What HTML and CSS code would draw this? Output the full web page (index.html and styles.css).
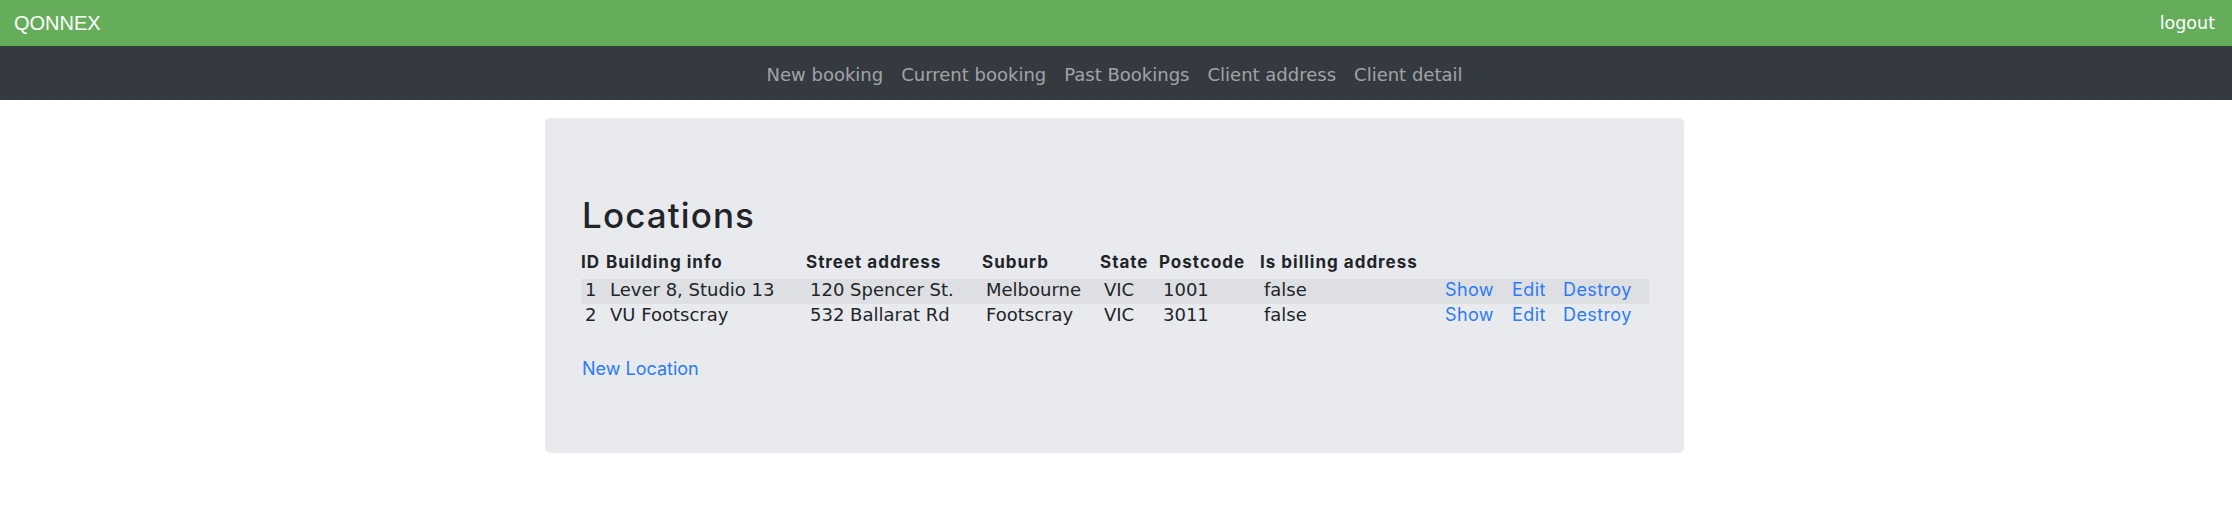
FILE: index.html
```html
<!DOCTYPE html>
<html lang="en">
<head>
<meta charset="utf-8">
<title>Locations</title>
<link rel="stylesheet" href="styles.css">
</head>
<body>
<header class="topbar">
  <span class="brand">QONNEX</span>
  <a class="logout" href="#">logout</a>
</header>
<nav class="mainnav">
  <a href="#">New booking</a>
  <a href="#">Current booking</a>
  <a href="#">Past Bookings</a>
  <a href="#">Client address</a>
  <a href="#">Client detail</a>
</nav>
<main class="page">
  <section class="card">
    <h1 class="title">Locations</h1>
    <table class="locations">
      <colgroup>
        <col class="c-id"><col class="c-building"><col class="c-street"><col class="c-suburb"><col class="c-state"><col class="c-post"><col class="c-billing"><col class="c-show"><col class="c-edit"><col class="c-destroy">
      </colgroup>
      <thead>
        <tr>
          <th>ID</th><th>Building info</th><th>Street address</th><th>Suburb</th><th>State</th><th>Postcode</th><th>Is billing address</th><th></th><th></th><th></th>
        </tr>
      </thead>
      <tbody>
        <tr class="odd">
          <td>1</td><td>Lever 8, Studio 13</td><td>120 Spencer St.</td><td>Melbourne</td><td>VIC</td><td>1001</td><td>false</td>
          <td class="act"><a href="#">Show</a></td><td class="act"><a href="#">Edit</a></td><td class="act"><a href="#">Destroy</a></td>
        </tr>
        <tr>
          <td>2</td><td>VU Footscray</td><td>532 Ballarat Rd</td><td>Footscray</td><td>VIC</td><td>3011</td><td>false</td>
          <td class="act"><a href="#">Show</a></td><td class="act"><a href="#">Edit</a></td><td class="act"><a href="#">Destroy</a></td>
        </tr>
      </tbody>
    </table>
    <p class="new-link"><a href="#">New Location</a></p>
  </section>
</main>
</body>
</html>
```
FILE: styles.css
```css
html, body {
  margin: 0;
  padding: 0;
  background: #ffffff;
}
body {
  font-family: Inter, "Noto Sans", sans-serif;
  color: #212529;
}
a {
  text-decoration: none;
}

.topbar {
  height: 46px;
  background: #66ad5b;
  display: flex;
  align-items: center;
  justify-content: space-between;
  padding: 0 17px 0 14px;
}
.brand {
  font-family: "Liberation Sans", Arial, sans-serif;
  font-size: 20px;
  color: #ffffff;
}
.logout {
  font-family: "DejaVu Sans", Verdana, sans-serif;
  font-size: 17.5px;
  color: #ffffff;
}

.mainnav {
  height: 54px;
  box-sizing: border-box;
  padding: 3px 3px 0 0;
  background: #343a40;
  display: flex;
  align-items: center;
  justify-content: center;
  gap: 18px;
}
.mainnav a {
  font-family: "DejaVu Sans", Verdana, sans-serif;
  font-size: 18px;
  color: rgba(255, 255, 255, 0.55);
}

.page {
  padding: 18px 3px 0 0;
}
.card {
  width: 1139px;
  box-sizing: border-box;
  margin: 0 auto;
  background: #e9eaee;
  border-radius: 5px;
  padding: 76px 37px 71px;
}
.title {
  margin: 0 0 16px;
  font-size: 35px;
  font-weight: 500;
  line-height: 42px;
  letter-spacing: 1.1px;
}

.locations {
  border-collapse: collapse;
  table-layout: fixed;
  width: 1068px;
  margin-left: -1px;
}
.c-id { width: 25px; }
.c-building { width: 200px; }
.c-street { width: 176px; }
.c-suburb { width: 118px; }
.c-state { width: 59px; }
.c-post { width: 101px; }
.c-billing { width: 185px; }
.c-show { width: 67px; }
.c-edit { width: 51px; }
.c-destroy { width: 86px; }

.locations th {
  text-align: left;
  font-size: 17px;
  font-weight: 700;
  letter-spacing: 1px;
  line-height: 21px;
  padding: 0 0 6px 0;
  white-space: nowrap;
}
.locations td {
  font-family: "DejaVu Sans", Verdana, sans-serif;
  font-size: 18px;
  line-height: 21px;
  padding: 0 0 4px 4px;
  white-space: nowrap;
}
.locations tr.odd td {
  background: rgba(0, 0, 0, 0.045);
}
.locations td.act {
  padding-left: 0;
}
.locations td.act a {
  font-family: Inter, sans-serif;
  font-size: 18px;
  letter-spacing: 0.4px;
  color: #2b7bf3;
}

.new-link {
  margin: 26px 0 0;
  font-size: 18px;
  line-height: 27px;
}
.new-link a {
  color: #2b7bf3;
}
```
